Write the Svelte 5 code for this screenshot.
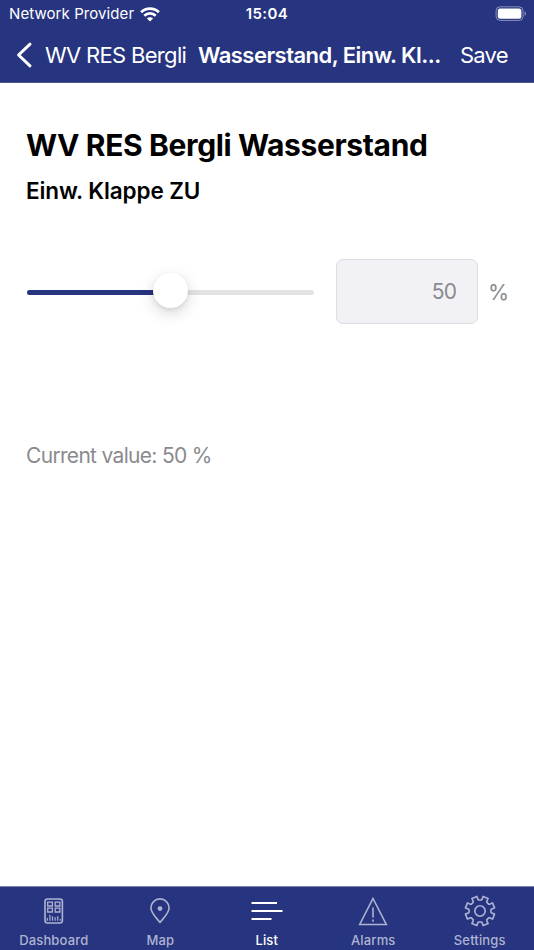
<script lang="ts">
	const title = 'WV RES Bergli Wasserstand';
	const unit = '%';

	let value = $state(50);
	let active = $state('list');

	const tabs = [
		{ id: 'dashboard', label: 'Dashboard' },
		{ id: 'map', label: 'Map' },
		{ id: 'list', label: 'List' },
		{ id: 'alarms', label: 'Alarms' },
		{ id: 'settings', label: 'Settings' }
	];

	// outline of the cog, eight teeth around (17, 17)
	function cog(outer: number, inner: number) {
		const points: string[] = [];
		for (let i = 0; i < 8; i++) {
			const mid = 22.5 + i * 45;
			for (const [offset, radius] of [
				[-16, inner],
				[-12.5, inner + 0.8],
				[-10.5, outer],
				[10.5, outer],
				[12.5, inner + 0.8],
				[16, inner]
			]) {
				const a = ((mid + offset) * Math.PI) / 180;
				points.push(`${(17 + radius * Math.cos(a)).toFixed(2)} ${(17 + radius * Math.sin(a)).toFixed(2)}`);
			}
		}
		return `M${points.join('L')}Z`;
	}
</script>

<div class="app">
	<header>
		<div class="status">
			<div class="carrier">
				<span>Network Provider</span>
				<svg width="20" height="15" viewBox="0 0 20 15" fill="none" stroke="#fff" stroke-width="2.7">
					<path d="M1.1 5.3a12.6 12.6 0 0 1 17.8 0" />
					<path d="M4.3 8.7a8.1 8.1 0 0 1 11.4 0" />
					<path d="M10 14.6 6.9 11.5a4.4 4.4 0 0 1 6.2 0z" fill="#fff" stroke="none" />
				</svg>
			</div>
			<span class="time">15:04</span>
			<svg class="battery" width="32" height="16" viewBox="0 0 32 16">
				<rect x="1.1" y="0.8" width="27" height="13.6" rx="4" fill="none" stroke="#fff" stroke-opacity="0.45" />
				<rect x="2.8" y="2.4" width="23.6" height="10.4" rx="2.4" fill="#fff" />
				<path d="M29.6 5.3c1.8.8 1.8 3.8 0 4.6z" fill="#fff" fill-opacity="0.5" />
			</svg>
		</div>
		<nav class="bar">
			<button class="back">
				<svg width="17" height="26" viewBox="0 0 17 26" fill="none" stroke="#fff" stroke-width="3" stroke-linecap="round" stroke-linejoin="round">
					<path d="M14 2.2 2.6 13 14 23.8" />
				</svg>
				<span>WV RES Bergli</span>
			</button>
			<strong>Wasserstand, Einw. Kl...</strong>
			<button class="save">Save</button>
		</nav>
	</header>

	<main>
		<h1>{title}</h1>
		<h2>Einw. Klappe ZU</h2>

		<div class="control">
			<div class="slider">
				<div class="fill" style="width: {value}%"></div>
				<div class="thumb" style="left: {value}%"></div>
			</div>
			<input bind:value />
			<span class="unit">{unit}</span>
		</div>

		<p>Current value: {value} {unit}</p>
	</main>

	<footer>
		{#each tabs as tab}
			<button class="tab" class:active={active === tab.id} onclick={() => (active = tab.id)}>
				<svg width="34" height="34" viewBox="0 0 34 34" fill="none" stroke="currentColor" stroke-width="1.6">
					{#if tab.id === 'dashboard'}
						<rect x="8" y="5" width="17.4" height="24" rx="2.5" />
						<path d="M10.7 8.2h4.7v3.8h-4.7zM18.2 8.2h4.7v3.8h-4.7zM10.7 14.2h4.7V18h-4.7zM18.2 14.2h4.7V18h-4.7z" stroke-width="1.3" />
						<path d="M10.3 26.8V24M12.9 26.8v-6M15.5 26.8v-4.5M18.1 26.8v-3.5M20.7 26.8v-4.5M23.3 26.8V25" stroke-width="1.2" />
					{:else if tab.id === 'map'}
						<path d="M17 28.4C12.500 23.200 7.900 18.700 7.900 14a9.100 9.100 0 0 1 18.200 0c0 4.700-4.600 9.200-9.100 14.400z" />
						<circle cx="17" cy="14.6" r="2.4" fill="currentColor" stroke="none" />
					{:else if tab.id === 'list'}
						<path d="M1.5 9H27M1.5 17h31M1.5 25h20" stroke-width="2" />
					{:else if tab.id === 'alarms'}
						<path d="M17 4.5 30.3 30.5H3.7z" />
						<path d="M17 13.5v10M17 25.5v2.2" />
					{:else}
						<path d={cog(14.9, 11)} stroke-linejoin="round" />
						<circle cx="17" cy="17" r="5.2" />
					{/if}
				</svg>
				<span>{tab.label}</span>
			</button>
		{/each}
	</footer>
</div>

<style>
	.app {
		display: flex;
		flex-direction: column;
		height: 950px;
		width: 534px;
		background: #fff;
		font-family: Inter, 'Liberation Sans', sans-serif;
		overflow: hidden;
	}

	button {
		padding: 0;
		border: 0;
		background: none;
		color: inherit;
		font: inherit;
	}

	header {
		box-sizing: border-box;
		height: 83px;
		background: #27347f;
		border-bottom: 1px solid #4c568f;
		color: #fff;
	}

	.status {
		display: grid;
		grid-template-columns: 1fr auto 1fr;
		align-items: center;
		height: 27px;
		padding: 0 7px 0 9px;
		font-size: 15px;
		line-height: 28px;
	}

	.carrier {
		display: flex;
		align-items: center;
		gap: 6px;
		letter-spacing: 0.08px;
	}

	.time {
		margin-right: 2px;
		font-weight: 600;
		letter-spacing: 0.4px;
	}

	.battery {
		justify-self: end;
	}

	.bar {
		display: flex;
		align-items: center;
		height: 56px;
		padding-left: 16px;
		font-size: 22px;
		white-space: nowrap;
	}

	.back {
		display: flex;
		align-items: center;
		gap: 12px;
		width: 182px;
		letter-spacing: -0.68px;
	}

	.bar strong {
		width: 262px;
		font-weight: 600;
		letter-spacing: -0.53px;
	}

	.save {
		letter-spacing: -0.8px;
	}

	main {
		flex: 1;
		padding: 0 26px;
	}

	h1 {
		margin: 42px 0 0;
		font-size: 30px;
		font-weight: 700;
		line-height: 40px;
		letter-spacing: -0.36px;
		white-space: nowrap;
	}

	h2 {
		margin: 11px 0 0;
		font-size: 22.5px;
		font-weight: 600;
		line-height: 30px;
		letter-spacing: -0.1px;
	}

	.control {
		display: flex;
		align-items: center;
		margin-top: 53px;
		height: 65px;
		color: #8a8a8e;
		font-size: 21.5px;
	}

	.slider {
		position: relative;
		flex: none;
		width: 287px;
		height: 5px;
		margin: 1px 22px 0 1px;
		border-radius: 3px;
		background: #e3e3e3;
	}

	.fill {
		height: 100%;
		border-radius: 3px;
		background: #27347f;
	}

	.thumb {
		position: absolute;
		top: -17px;
		width: 35px;
		height: 35px;
		margin-left: -17.5px;
		border-radius: 50%;
		background: #fff;
		box-shadow: 0 5px 16px rgba(0, 0, 0, 0.16), 0 2px 4px rgba(0, 0, 0, 0.08);
	}

	input {
		box-sizing: border-box;
		flex: none;
		width: 142px;
		height: 65px;
		padding: 0 21px;
		border: 1px solid #dedee2;
		border-radius: 7px;
		background: #f2f1f6;
		color: inherit;
		font: 21px Inter, sans-serif;
		letter-spacing: -0.9px;
		text-align: right;
	}

	.unit {
		margin-left: 10px;
	}

	p {
		margin: 117px 0 0;
		color: #8a8a8e;
		font-size: 21px;
		line-height: 30px;
		letter-spacing: -0.68px;
	}

	footer {
		display: grid;
		grid-template-columns: repeat(5, 1fr);
		box-sizing: border-box;
		height: 64px;
		padding: 0 1px 0 0.5px;
		border-top: 1px solid #7e86ae;
		background: #27347f;
	}

	.tab {
		display: flex;
		flex-direction: column;
		align-items: center;
		padding-top: 7px;
		color: #aeb3d2;
		font-size: 13px;
		font-weight: 500;
		line-height: 24px;
		letter-spacing: 0.15px;
	}

	.tab.active {
		color: #fff;
	}
</style>
